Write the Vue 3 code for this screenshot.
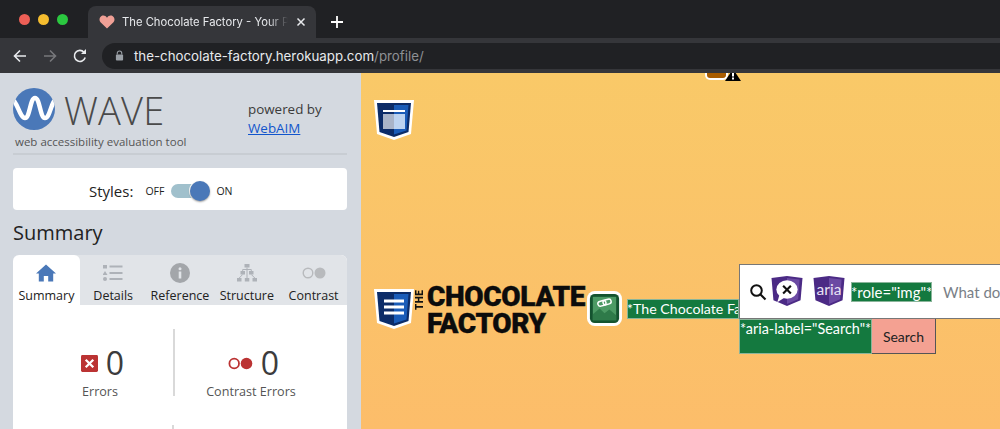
<script setup>
const tabs = [
  { label: 'Summary', icon: 'home', active: true },
  { label: 'Details', icon: 'list' },
  { label: 'Reference', icon: 'info' },
  { label: 'Structure', icon: 'tree' },
  { label: 'Contrast', icon: 'contrast' }
]
</script>

<template>
  <div class="window">
    <header class="chrome">
      <div class="tabstrip">
        <div class="lights">
          <span class="light red"></span>
          <span class="light yellow"></span>
          <span class="light green"></span>
        </div>
        <div class="browser-tab">
          <svg class="heart" viewBox="0 0 18 16" width="16" height="14"><path d="M9 15.500 1.600 8.200C-.4 6 .3 2.400 2.700 1.100 5 0 7.500.7 9 3 10.500.7 13 0 15.300 1.100c2.400 1.300 3.100 4.900 1.100 7.100Z" fill="#f0a096"/></svg>
          <span class="tab-title">The Chocolate Factory - Your P</span>
          <svg class="tab-close" viewBox="0 0 10 10" width="10" height="10"><path d="M1.500 1.500l7 7M8.500 1.500l-7 7" stroke="#e8eaed" stroke-width="1.500" fill="none"/></svg>
        </div>
        <svg class="plus" viewBox="0 0 12 12" width="12" height="12"><path d="M6 0v12M0 6h12" stroke="#fff" stroke-width="1.800"/></svg>
      </div>
      <div class="toolbar">
        <svg class="nav" viewBox="0 0 16 16" width="16" height="16"><path d="M14 8H2.500M8 2.500 2.500 8 8 13.500" stroke="#e8eaed" stroke-width="1.600" fill="none"/></svg>
        <svg class="nav" viewBox="0 0 16 16" width="16" height="16"><path d="M2 8h11.500M8 2.500 13.500 8 8 13.500" stroke="#77787b" stroke-width="1.600" fill="none"/></svg>
        <svg class="nav" viewBox="0 0 16 16" width="16" height="16"><path d="M13.200 9.500A5.500 5.500 0 1 1 12 4.200" stroke="#e8eaed" stroke-width="1.600" fill="none"/><path d="M14 1v5H9Z" fill="#e8eaed"/></svg>
        <div class="omnibox">
          <svg viewBox="0 0 10 12" width="9" height="11"><path d="M2.500 5V3.500a2.500 2.500 0 0 1 5 0V5" stroke="#9aa0a6" stroke-width="1.200" fill="none"/><rect x="1" y="5" width="8" height="6.500" rx="1" fill="#9aa0a6"/></svg>
          <span class="url">the-chocolate-factory.herokuapp.com<span class="url-path">/profile/</span></span>
        </div>
      </div>
    </header>

    <div class="content">
      <aside class="sidebar">
        <div class="brand">
          <div class="brand-left">
            <div class="logo-row">
              <svg viewBox="0 0 42 42" width="42" height="42" class="wave-mark">
                <defs><clipPath id="wclip"><circle cx="21" cy="21" r="21"/></clipPath></defs>
                <circle cx="21" cy="21" r="21" fill="#4a78b8"/>
                <path clip-path="url(#wclip)" d="M-1 11C4 13 7 30 12 30S17 10 22 10 27 30 32 30 38 14 43 11" stroke="#fff" stroke-width="4.500" fill="none"/>
              </svg>
              <span class="wave-word">WAVE</span>
            </div>
            <div class="tagline">web accessibility evaluation tool</div>
          </div>
          <div class="powered">
            <div>powered by</div>
            <a class="webaim">WebAIM</a>
          </div>
        </div>

        <div class="styles-card">
          <span class="styles-label">Styles:</span>
          <span class="switch-text off">OFF</span>
          <span class="switch"><span class="knob"></span></span>
          <span class="switch-text">ON</span>
        </div>

        <h2 class="summary-title">Summary</h2>

        <div class="panel">
          <div class="tabs">
            <div v-for="t in tabs" :key="t.label" class="tab" :class="{ active: t.active }">
              <svg v-if="t.icon === 'home'" viewBox="0 0 20 18" width="20" height="18"><path d="M10 .5 0 9.500h2.800V17.500h5v-5.500h4.400v5.500h5V9.500H20Z" fill="#4a78b8"/></svg>
              <svg v-else-if="t.icon === 'list'" viewBox="0 0 20 18" width="20" height="18"><g fill="#aeb2b8"><rect x="0" y="1" width="4" height="3.500"/><path d="M2 7l2.500 4h-5Z"/><circle cx="2" cy="15" r="2"/><rect x="6.500" y="1.500" width="13" height="2"/><rect x="6.500" y="8" width="13" height="2"/><rect x="6.500" y="14" width="13" height="2"/></g></svg>
              <svg v-else-if="t.icon === 'info'" viewBox="0 0 20 20" width="20" height="20"><circle cx="10" cy="10" r="10" fill="#a3a6aa"/><rect x="8.700" y="8.500" width="2.600" height="7" fill="#e1e4e8"/><circle cx="10" cy="5.700" r="1.500" fill="#e1e4e8"/></svg>
              <svg v-else-if="t.icon === 'tree'" viewBox="0 0 20 18" width="20" height="18"><g fill="#aeb2b8"><rect x="7.500" y="0" width="5" height="3.500"/><rect x="3.500" y="7" width="4.500" height="3.500"/><rect x="12" y="7" width="4.500" height="3.500"/><rect x="0" y="14" width="4.500" height="3.500"/><rect x="7.800" y="14" width="4.500" height="3.500"/><rect x="15.500" y="14" width="4.500" height="3.500"/></g><path d="M10 3.500V14M5.700 10.500 2.200 14M14.300 10.500 17.800 14M5.700 7V5.500h8.600V7" stroke="#aeb2b8" fill="none"/></svg>
              <svg v-else viewBox="0 0 24 12" width="24" height="12"><circle cx="6" cy="6" r="4.800" fill="none" stroke="#b8babd" stroke-width="1.400"/><circle cx="18" cy="6" r="5.500" fill="#b8babd"/></svg>
              <span class="tab-label">{{ t.label }}</span>
            </div>
          </div>
          <div class="panel-body">
            <div class="stats">
              <div class="stat errors">
                <div class="stat-top">
                  <svg viewBox="0 0 18 18" width="17" height="17"><rect width="18" height="18" rx="1.500" fill="#bb3333"/><path d="M5 5l8 8M13 5l-8 8" stroke="#fff" stroke-width="2.400"/></svg>
                  <span class="stat-num">0</span>
                </div>
                <div class="stat-label">Errors</div>
              </div>
              <div class="stat divided">
                <div class="stat-top">
                  <svg viewBox="0 0 25 13" width="25" height="13"><circle cx="6.200" cy="6.500" r="4.800" fill="none" stroke="#bb3333" stroke-width="1.800"/><circle cx="18.500" cy="6.500" r="5.800" fill="#bb3333"/></svg>
                  <span class="stat-num">0</span>
                </div>
                <div class="stat-label">Contrast Errors</div>
              </div>
            </div>
            <div class="stats-next"><span></span></div>
          </div>
        </div>
      </aside>

      <main class="page">
        <div class="alert-pin">
          <span class="alert-img"></span>
          <svg viewBox="0 0 16 12" width="16" height="12" class="alert-tri"><path d="M8 0 16 12H0Z" fill="#000"/><rect x="7" y="3.500" width="2" height="4" fill="#fff"/><rect x="7" y="8.500" width="2" height="2" fill="#fff"/></svg>
        </div>

        <svg class="shield first" viewBox="0 0 40 40" width="40" height="40">
          <path d="M0 0H40L37 34 20 40 3 34Z" fill="#fff"/>
          <path d="M3 3H37L34.500 32 20 37 5.500 32Z" fill="#0c2c68"/>
          <path d="M20 5H34.500L32.500 30.500 20 34.500Z" fill="#1a5cb8"/>
          <rect x="9" y="10" width="22" height="2" fill="#fff"/>
          <path d="M9 14H20V29H9Z" fill="#a9b4c8"/>
          <path d="M20 14H31V29H20Z" fill="#bcd3f0"/>
        </svg>

        <div class="header-row">
          <svg class="shield" viewBox="0 0 40 40" width="40" height="40">
            <path d="M0 0H40L37 34 20 40 3 34Z" fill="#fff"/>
            <path d="M3 3H37L34.500 32 20 37 5.500 32Z" fill="#0c2c68"/>
            <path d="M20 5H34.500L32.500 30.500 20 34.500Z" fill="#1a5cb8"/>
            <path d="M10 12H30M10 18H30M10 24H30" stroke="#fff" stroke-width="2.800"/>
          </svg>

          <div class="site-logo">
            <span class="the">THE</span>
            <div class="logo-lines">
              <div>CHOCOLATE</div>
              <div>FACTORY</div>
            </div>
          </div>

          <svg class="link-pin" viewBox="0 0 36 36" width="35" height="35">
            <rect x="0" y="0" width="36" height="36" rx="8" fill="#fff"/>
            <rect x="3" y="3" width="30" height="30" rx="5" fill="#14532f"/>
            <rect x="6" y="6" width="24" height="24" fill="#4c9a64"/>
            <path d="M6 30V24l7-6 5 5 5-4 7 6v5Z" fill="#2e7a49"/>
            <g transform="rotate(-15 18 12)" fill="none" stroke="#fff" stroke-width="1.500">
              <rect x="11" y="9.500" width="8.500" height="5" rx="2.500"/>
              <rect x="16.500" y="9.500" width="8.500" height="5" rx="2.500"/>
            </g>
          </svg>

          <span class="tag link-tag">*The Chocolate Fa</span>

          <div class="search-group">
            <div class="search-box">
              <svg class="mag" viewBox="0 0 18 18" width="18" height="18"><circle cx="7.500" cy="7.500" r="5.300" fill="none" stroke="#111" stroke-width="2"/><path d="M11.500 11.500l5 5" stroke="#111" stroke-width="2.200"/></svg>
              <svg class="purple" viewBox="0 0 32 32" width="32" height="31">
                <path d="M0 2 16 0 32 2 30 25 16 31 2 25Z" fill="#4b2a85"/>
                <path d="M16 2 29 3.500 27.500 24 16 29Z" fill="#6b4aa3"/>
                <ellipse cx="16" cy="14" rx="11" ry="9.500" fill="#fff"/>
                <path d="M8 20 6 27 14 22Z" fill="#fff"/>
                <path d="M12 10l8 8M20 10l-8 8" stroke="#111" stroke-width="2.200"/>
              </svg>
              <svg class="purple aria" viewBox="0 0 32 32" width="32" height="31">
                <path d="M0 2 16 0 32 2 30 25 16 31 2 25Z" fill="#4b2a85"/>
                <path d="M16 2 29 3.500 27.500 24 16 29Z" fill="#6b4aa3"/>
                <text x="16" y="20" text-anchor="middle" class="aria-text">aria</text>
              </svg>
              <span class="tag role-tag">*role="img"*</span>
              <span class="placeholder">What do you</span>
            </div>
            <div class="search-actions">
              <span class="tag aria-tag">*aria-label="Search"*</span>
              <span class="search-btn">Search</span>
            </div>
          </div>
        </div>
      </main>
    </div>
  </div>
</template>

<style>
html, body { margin: 0; padding: 0; overflow: hidden; }
</style>

<style scoped>
.window { width: 1000px; height: 429px; overflow: hidden; display: flex; flex-direction: column; font-family: "Open Sans", sans-serif; }
.chrome { flex: none; background: #202124; }
.tabstrip { height: 38px; display: flex; align-items: flex-end; position: relative; }
.lights { display: flex; gap: 8px; padding: 0 0 13px 19px; width: 88px; flex: none; box-sizing: border-box; }
.light { width: 11px; height: 11px; flex: none; border-radius: 50%; }
.red { background: #ed5f56; }
.yellow { background: #f5bd2f; }
.green { background: #2bc840; }
.browser-tab { width: 228px; height: 32px; background: #35363a; border-radius: 8px 8px 0 0; display: flex; align-items: center; box-sizing: border-box; padding: 0 10px 0 11px; }
.heart { flex: none; }
.tab-title { margin-left: 7px; width: 166px; flex: none; overflow: hidden; white-space: nowrap; font: 11.250px Inter, sans-serif; color: #e8eaed; -webkit-mask-image: linear-gradient(to right, #000 88%, transparent 100%); mask-image: linear-gradient(to right, #000 88%, transparent 100%); }
.tab-close { margin-left: 8px; flex: none; }
.plus { margin: 0 0 10px 15px; }
.toolbar { height: 35px; background: #35363a; display: flex; align-items: center; padding: 0 0 0 12px; gap: 14px; }
.omnibox { flex: 1; height: 26px; background: #202124; border-radius: 13px 0 0 13px; display: flex; align-items: center; padding-left: 13px; gap: 10px; }
.url { font: 13.300px Inter, sans-serif; color: #e8eaed; white-space: nowrap; }
.url-path { color: #8e9094; }
.content { flex: 1; min-height: 0; display: flex; }
.sidebar { width: 361px; flex: none; background: #d4d9e0; box-sizing: border-box; padding: 15px 14px 0 13px; }
.brand { display: flex; height: 65px; border-bottom: 2px solid #c8cdd3; }
.brand-left { width: 235px; }
.logo-row { display: flex; align-items: center; height: 42px; }
.wave-mark { flex: none; }
.wave-word { margin-left: 9px; padding-top: 2px; font-size: 38px; font-weight: 300; color: #4a4a4a; letter-spacing: .2px; line-height: 42px; }
.tagline { margin: 3px 0 0 2px; font-size: 11.500px; line-height: 17px; color: #555; white-space: nowrap; }
.powered { padding-top: 12px; font-size: 13.400px; line-height: 18.500px; color: #3b3b3b; }
.webaim { color: #1155cc; text-decoration: underline; }
.styles-card { margin-top: 13px; height: 42px; box-sizing: border-box; padding: 4px 0 0 76px; background: #fff; border-radius: 4px; display: flex; align-items: center; }
.styles-label { font-size: 15px; color: #222; margin-right: 12px; }
.switch-text { font-size: 10.500px; color: #222; }
.switch { position: relative; width: 30px; height: 14px; margin: 0 15px 0 7px; background: #a0c0cc; border-radius: 7px; }
.knob { position: absolute; right: -9px; top: -3px; width: 20px; height: 20px; border-radius: 50%; background: #4a78b8; box-shadow: 0 1px 2px rgba(0,0,0,.4), 0 0 0 1px #fff; }
.summary-title { margin: 10px 0 0; font-size: 20px; line-height: 26px; font-weight: 400; color: #222; }
.panel { margin-top: 9px; background: #fff; border-radius: 6px 6px 0 0; overflow: hidden; height: 200px; }
.tabs { display: flex; height: 50px; background: #e1e4e8; }
.tab { flex: 1; display: flex; flex-direction: column; align-items: center; box-sizing: border-box; padding-top: 8px; }
.tab svg { height: 20px; }
.tab.active { background: #fff; border-radius: 6px 6px 0 0; }
.tab-label { margin-top: 4px; font-size: 12.500px; line-height: 18px; color: #222; white-space: nowrap; }
.stats { display: flex; padding-top: 24px; }
.stat { width: 160px; height: 67px; box-sizing: border-box; padding-top: 16px; display: flex; flex-direction: column; align-items: center; }
.stat.errors { padding-left: 14px; }
.stat.divided { flex: 1; border-left: 2px solid #d9d9d9; padding-right: 20px; }
.stat-top { display: flex; align-items: center; gap: 8px; height: 36px; flex: none; margin-left: 5px; }
.stat-num { font-size: 32px; line-height: 40px; color: #3c3c3c; }
.stat-label { font-size: 12.600px; line-height: 18px; color: #555; margin-top: 2px; flex: none; }
.stats-next { margin: 29px 0 0 159px; }
.stats-next span { display: block; width: 2px; height: 10px; background: #d9d9d9; }
.page { flex: 1; min-width: 0; position: relative; background: linear-gradient(#f9c968, #fcbd6a); padding: 27px 0 0 13px; overflow: hidden; display: flex; flex-direction: column; }
.alert-pin { position: absolute; left: 344px; top: 0; width: 36px; height: 10px; }
.alert-img { position: absolute; left: 0; top: 0; width: 19px; height: 5px; background: #a85c00; border: 2px solid #fff; border-top: 0; border-radius: 0 0 5px 5px; }
.alert-tri { position: absolute; left: 20px; top: -4px; }
.shield { flex: none; }
.first { display: block; }
.header-row { display: flex; align-items: flex-start; margin-top: 148px; }
.header-row > .shield { margin-top: 1px; }
.site-logo { display: flex; margin: -7px 0 0 0; flex: none; }
.the { writing-mode: vertical-rl; transform: rotate(180deg); font: 900 10px/10px Roboto, sans-serif; color: #111; height: 21px; margin: 8px 2px 0 1px; text-align: center; letter-spacing: .4px; }
.logo-lines { font: 900 28px/27px Roboto, sans-serif; color: #0c0c0c; letter-spacing: -.35px; -webkit-text-stroke: .4px #0c0c0c; white-space: nowrap; width: 160px; padding-top: 2px; }
.link-pin { flex: none; margin: 3px 0 0 0; }
.tag { background: #14793f; color: #fff; font: 15px/20px Lato, sans-serif; white-space: nowrap; outline: 1px solid #8ab59a; outline-offset: -1px; }
.link-tag { width: 112px; margin: 11px 0 0 5px; overflow: hidden; flex: none; font-size: 14.200px; }
.search-group { flex: none; width: 261px; margin-top: -24px; position: relative; }
.search-box { height: 55px; box-sizing: border-box; background: #fff; border: 1px solid #777; border-right: 0; display: flex; align-items: center; padding-left: 9px; }
.mag { flex: none; margin-right: 4px; }
.purple { flex: none; }
.aria { margin-left: 10px; }
.aria-text { font: 16px Lato, sans-serif; fill: #e8e2f4; }
.role-tag { margin-left: 6px; width: 81px; text-align: center; flex: none; }
.placeholder { margin-left: 11px; font: 15px Lato, sans-serif; color: #7a7f87; white-space: nowrap; }
.search-actions { display: flex; width: 197px; height: 35px; }
.aria-tag { width: 133px; height: 35px; flex: none; box-sizing: border-box; font-size: 14.400px; line-height: 20px; padding-left: 1px; overflow: hidden; }
.search-btn { flex: 1; background: #f4a192; border: 1px solid #555; border-top: 0; border-left: 0; display: flex; align-items: center; justify-content: center; font: 14px Lato, sans-serif; color: #222; }
</style>
